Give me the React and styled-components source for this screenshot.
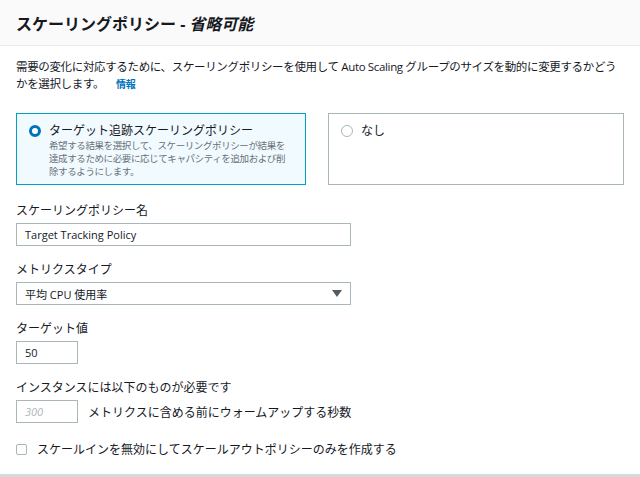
import React from "react";
import styled, { createGlobalStyle } from "styled-components";

const Global = createGlobalStyle`
  body { margin: 0; background: #fff; font-family: "Open Sans", "Noto Sans CJK JP", sans-serif; color: #16191f; }
`;

const Panel = styled.div`
  width: 640px;
  height: 477px;
  border-bottom: 3px solid #d5dbdb;
  box-sizing: border-box;
`;

const Header = styled.div`
  height: 45px;
  background: #fafafa;
  border-bottom: 1px solid #eaeded;
  display: flex;
  align-items: center;
  padding: 0 16px;
  font-size: 16px;
  font-weight: 700;
`;

const Body = styled.div`
  padding: 12px 16px 0;
`;

const Desc = styled.p`
  margin: 0;
  font-size: 11.5px;
  line-height: 17px;
  letter-spacing: -0.35px;
`;

const Info = styled.span`
  color: #0073bb;
  font-weight: 700;
  font-size: 10px;
  margin-left: 12px;
`;

const Tiles = styled.div`
  display: grid;
  grid-template-columns: 290px 296px;
  gap: 22px;
  margin-top: 20px;
`;

const Tile = styled.div`
  height: 72px;
  box-sizing: border-box;
  border: 1px solid ${(p) => (p.$active ? "#00a1c9" : "#aab7b8")};
  background: ${(p) => (p.$active ? "#f1faff" : "#fff")};
  padding: 8px 12px;
  display: flex;
  gap: 8px;
`;

const Radio = styled.span`
  flex: none;
  width: 12px;
  height: 12px;
  margin-top: 3px;
  border-radius: 50%;
  box-sizing: border-box;
  border: ${(p) => (p.$on ? "3.5px solid #0073bb" : "1px solid #aab7b8")};
  background: #fff;
`;

const TileTitle = styled.div`
  font-size: 12px;
  line-height: 17px;
`;

const TileSub = styled.div`
  font-size: 9.5px;
  line-height: 13px;
  letter-spacing: -0.4px;
  color: #687078;
`;

const Field = styled.div`
  margin-top: ${(p) => p.$mt || 16}px;
`;

const Label = styled.div`
  font-size: 12px;
  line-height: 16px;
  margin-bottom: 4px;
`;

const Box = styled.div`
  width: ${(p) => p.$w}px;
  height: 23px;
  box-sizing: border-box;
  border: 1px solid #aab7b8;
  display: flex;
  align-items: center;
  justify-content: space-between;
  padding: 0 8px;
  font-size: 11px;
  color: ${(p) => (p.$ph ? "#aab7b8" : "#16191f")};
  font-style: ${(p) => (p.$ph ? "italic" : "normal")};
`;

const Row = styled.div`
  display: flex;
  align-items: center;
  gap: 10px;
  font-size: 12px;
`;

const Check = styled.span`
  width: 11px;
  height: 11px;
  border: 1px solid #aab7b8;
  border-radius: 2px;
  box-sizing: border-box;
`;

export default function App() {
  return (
    <Panel>
      <Global />
      <Header>
        スケーリングポリシー - <i style={{ marginLeft: 4 }}>省略可能</i>
      </Header>
      <Body>
        <Desc>
          需要の変化に対応するために、スケーリングポリシーを使用して Auto Scaling グループのサイズを動的に変更するかどうかを選択します。
          <Info>情報</Info>
        </Desc>
        <Tiles>
          <Tile $active>
            <Radio $on />
            <div>
              <TileTitle>ターゲット追跡スケーリングポリシー</TileTitle>
              <TileSub>
                希望する結果を選択して、スケーリングポリシーが結果を達成するために必要に応じてキャパシティを追加および削除するようにします。
              </TileSub>
            </div>
          </Tile>
          <Tile>
            <Radio />
            <TileTitle>なし</TileTitle>
          </Tile>
        </Tiles>
        <Field $mt={18}>
          <Label>スケーリングポリシー名</Label>
          <Box $w={335}>Target Tracking Policy</Box>
        </Field>
        <Field>
          <Label>メトリクスタイプ</Label>
          <Box $w={335}>
            平均 CPU 使用率
            <svg width="10" height="7" viewBox="0 0 10 7"><path d="M0 0h10L5 7z" fill="#545b64" /></svg>
          </Box>
        </Field>
        <Field>
          <Label>ターゲット値</Label>
          <Box $w={62}>50</Box>
        </Field>
        <Field>
          <Label>インスタンスには以下のものが必要です</Label>
          <Row>
            <Box $w={62} $ph>300</Box>
            メトリクスに含める前にウォームアップする秒数
          </Row>
        </Field>
        <Field $mt={17}>
          <Row>
            <Check />
            スケールインを無効にしてスケールアウトポリシーのみを作成する
          </Row>
        </Field>
      </Body>
    </Panel>
  );
}
